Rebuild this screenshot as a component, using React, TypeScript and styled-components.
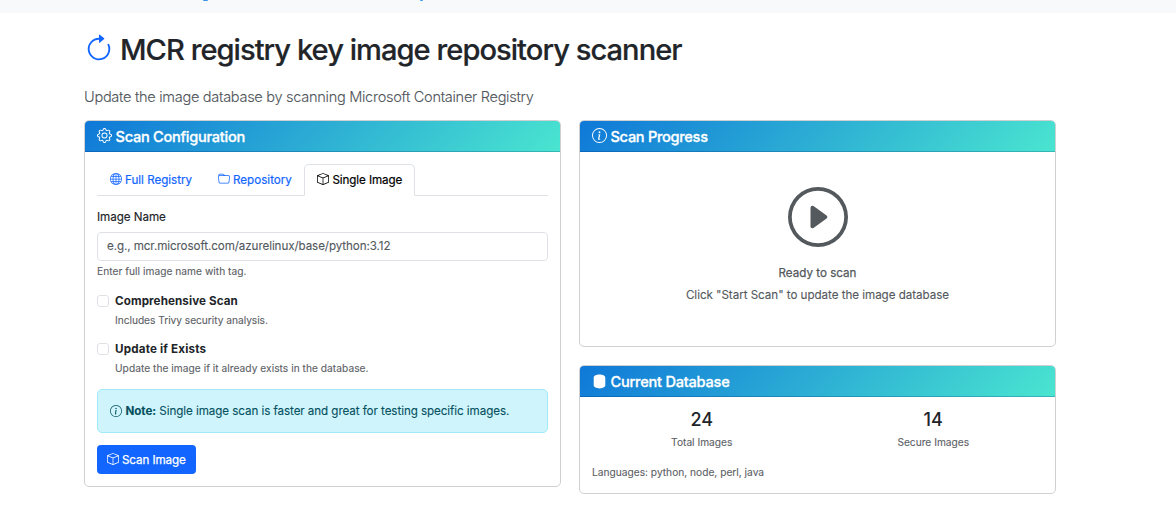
import React from "react";
import styled, { createGlobalStyle } from "styled-components";
import { BsArrowClockwise, BsBox, BsFolder, BsGear, BsGlobe, BsInfoCircle, BsPlayCircle } from "react-icons/bs";

const GlobalStyle = createGlobalStyle`
  *, *::before, *::after { box-sizing: border-box; }
  body {
    margin: 0;
    background: #fff;
    color: #212529;
    font: 400 11.64px/18px Inter, "Liberation Sans", sans-serif;
    overflow: hidden;
  }
  h1, h2, p { margin: 0; }
  svg { flex: none; display: block; }
`;

const Navbar = styled.div`
  height: 13px;
  background: #f8f9fb;
  display: flex;
  align-items: flex-start;
  padding-left: 203px;
  gap: 212px;
`;

const Tail = styled.span<{ $width: number }>`
  width: ${(p) => p.$width}px;
  height: 1px;
  border-radius: 0 0 2px 2px;
  background: #3b94ea;
`;

const Container = styled.main`
  width: 972px;
  margin: 0 0 0 84px;
`;

const Title = styled.h1`
  display: flex;
  align-items: center;
  gap: 6px;
  height: 36px;
  margin-top: 19px;
  font-size: 29.1px;
  line-height: 36px;
  font-weight: 500;
  -webkit-text-stroke: 0.2px currentColor;
  svg { color: #1266ff; margin-top: -3px; }
`;

const Fit = styled.span<{ $ls?: number }>`
  letter-spacing: ${(p) => p.$ls ?? 0}px;
  white-space: nowrap;
`;

const Lead = styled.p`
  margin-top: 18px;
  font-size: 14.55px;
  line-height: 22px;
  font-weight: 300;
  color: #50565b;
  -webkit-text-stroke: 0.1px currentColor;
`;

const Columns = styled.div`
  display: grid;
  grid-template-columns: 477px 477px;
  column-gap: 18px;
  align-items: start;
  margin-top: 12px;
`;

const Side = styled.div`
  display: grid;
  row-gap: 18px;
`;

const Card = styled.section<{ $height: number }>`
  height: ${(p) => p.$height}px;
  border: 1px solid #cfd0d1;
  border-radius: 5px;
  overflow: hidden;
`;

const CardHeader = styled.h2<{ $raised?: boolean }>`
  display: flex;
  align-items: center;
  gap: 3.5px;
  height: 31px;
  padding: 0 12px;
  color: #fff;
  font-size: 14.55px;
  font-weight: 500;
  line-height: 18px;
  -webkit-text-stroke: 0.3px #fff;
  background: linear-gradient(135deg, #0f78d8, #4ae5d0);
  border-bottom: 1px solid rgba(0, 40, 90, 0.22);
  span { padding-top: 2px; }
  svg { margin-top: ${(p) => (p.$raised ? -1 : 1)}px; }
`;

const CardBody = styled.div`
  padding: 12px;
`;

const Tabs = styled.div`
  display: flex;
  height: 32px;
  border-bottom: 1px solid #dee2e6;
`;

const Tab = styled.div<{ $active?: boolean; $width: number }>`
  display: flex;
  align-items: center;
  gap: ${(p) => (p.$active ? 3.5 : 3)}px;
  width: ${(p) => p.$width}px;
  height: 32px;
  padding: 0 0 1px 12px;
  border: 1px solid ${(p) => (p.$active ? "#dee2e6" : "transparent")};
  border-bottom-color: ${(p) => (p.$active ? "#fff" : "transparent")};
  border-radius: 5px 5px 0 0;
  color: ${(p) => (p.$active ? "#000" : "#1266ff")};
  -webkit-text-stroke: 0.2px currentColor;
  svg { margin-top: -1px; }
`;

const Label = styled.div`
  margin-top: 12px;
  -webkit-text-stroke: 0.15px currentColor;
`;

const Input = styled.div`
  height: 29px;
  margin-top: 6px;
  padding: 4px 9px;
  border: 1px solid #dee2e6;
  border-radius: 4px;
  color: #53595e;
  -webkit-text-stroke: 0.1px currentColor;
`;

const Small = styled.div`
  font-size: 10.2px;
  line-height: 16px;
  color: #5b6065;
  -webkit-text-stroke: 0.1px currentColor;
`;

const InputHint = styled(Small)`
  margin-top: 2px;
`;

const CheckRow = styled.div<{ $top: number }>`
  display: grid;
  grid-template-columns: 12px 1fr;
  column-gap: 6px;
  margin-top: ${(p) => p.$top}px;
`;

const Checkbox = styled.span`
  width: 12px;
  height: 12px;
  margin-top: 3px;
  border: 1px solid #dee2e6;
  border-radius: 3px;
`;

const Strong = styled.strong`
  font-weight: 700;
`;

const CheckHint = styled(Small)`
  margin-top: 2px;
`;

const Note = styled.div`
  display: flex;
  align-items: center;
  gap: 3.5px;
  height: 44px;
  margin-top: 13px;
  padding-left: 12px;
  border: 1px solid #9eeaf9;
  border-radius: 5px;
  background: #cff4fc;
  color: #055160;
  -webkit-text-stroke: 0.1px currentColor;
`;

const Button = styled.button`
  display: flex;
  align-items: center;
  gap: 3px;
  width: 99px;
  height: 29px;
  margin: 12px 0 0;
  padding: 0 0 0 10px;
  border: 0;
  border-radius: 4px;
  background: #1266ff;
  color: #fff;
  font: inherit;
  -webkit-text-stroke: 0.25px #fff;
  svg { margin-top: -1px; }
`;

const Ready = styled.div`
  display: flex;
  flex-direction: column;
  align-items: center;
  padding-top: 35px;
  color: #54595d;
`;

const ReadyText = styled.p<{ $top: number; $strong?: boolean }>`
  margin-top: ${(p) => p.$top}px;
  -webkit-text-stroke: ${(p) => (p.$strong ? 0.25 : 0.1)}px currentColor;
`;

const Stats = styled.div`
  display: grid;
  grid-template-columns: 1fr 1fr;
  width: 463px;
  margin-left: -6px;
  text-align: center;
`;

const Value = styled.div`
  font-size: 18px;
  line-height: 22px;
  font-weight: 500;
`;

const StatLabel = styled(Small)`
  margin-top: 3px;
`;

const Languages = styled(Small)`
  margin-top: 14px;
`;

const DatabaseIcon = () => (
  <svg width="15" height="15" viewBox="0 0 15 15" fill="currentColor">
    <path d="M1.700 3.700C1.700 1.800 4.400.6 7.500.6s5.800 1.200 5.800 3.100v7.600c0 1.900-2.700 3.100-5.800 3.100s-5.800-1.200-5.800-3.100Z" />
  </svg>
);

export default function App() {
  return (
    <>
      <GlobalStyle />
      <Navbar>
        <Tail $width={5} />
        <Tail $width={3} />
      </Navbar>
      <Container>
        <Title>
          <BsArrowClockwise size={30} />
          <Fit $ls={-0.96}>MCR registry key image repository scanner</Fit>
        </Title>
        <Lead><Fit $ls={-0.29}>Update the image database by scanning Microsoft Container Registry</Fit></Lead>
        <Columns>
          <Card $height={367}>
            <CardHeader $raised><BsGear size={15} /><Fit $ls={-0.25}>Scan Configuration</Fit></CardHeader>
            <CardBody>
              <Tabs>
                <Tab $width={108}><BsGlobe size={12} /><Fit $ls={-0.02}>Full Registry</Fit></Tab>
                <Tab $width={99}><BsFolder size={12} /><Fit>Repository</Fit></Tab>
                <Tab $active $width={111}><BsBox size={12} /><Fit $ls={-0.1}>Single Image</Fit></Tab>
              </Tabs>
              <Label><Fit $ls={-0.05}>Image Name</Fit></Label>
              <Input><Fit $ls={-0.09}>e.g., mcr.microsoft.com/azurelinux/base/python:3.12</Fit></Input>
              <InputHint><Fit $ls={0.03}>Enter full image name with tag.</Fit></InputHint>
              <CheckRow $top={13}>
                <Checkbox />
                <div>
                  <Strong><Fit $ls={0.1}>Comprehensive Scan</Fit></Strong>
                  <CheckHint><Fit $ls={-0.03}>Includes Trivy security analysis.</Fit></CheckHint>
                </div>
              </CheckRow>
              <CheckRow $top={12}>
                <Checkbox />
                <div>
                  <Strong><Fit $ls={0.18}>Update if Exists</Fit></Strong>
                  <CheckHint><Fit $ls={0.03}>Update the image if it already exists in the database.</Fit></CheckHint>
                </div>
              </CheckRow>
              <Note>
                <BsInfoCircle size={12} />
                <Fit $ls={-0.07}><Strong>Note:</Strong> Single image scan is faster and great for testing specific images.</Fit>
              </Note>
              <Button><BsBox size={12} /><Fit $ls={-0.1}>Scan Image</Fit></Button>
            </CardBody>
          </Card>
          <Side>
            <Card $height={227}>
              <CardHeader $raised><BsInfoCircle size={15} /><Fit $ls={-0.28}>Scan Progress</Fit></CardHeader>
              <Ready>
                <BsPlayCircle size={60} />
                <ReadyText $top={17} $strong><Fit>Ready to scan</Fit></ReadyText>
                <ReadyText $top={4}><Fit $ls={-0.04}>Click "Start Scan" to update the image database</Fit></ReadyText>
              </Ready>
            </Card>
            <Card $height={129}>
              <CardHeader><DatabaseIcon /><Fit $ls={-0.22}>Current Database</Fit></CardHeader>
              <CardBody>
                <Stats>
                  <div><Value>24</Value><StatLabel><Fit>Total Images</Fit></StatLabel></div>
                  <div><Value>14</Value><StatLabel><Fit>Secure Images</Fit></StatLabel></div>
                </Stats>
                <Languages><Fit>Languages: python, node, perl, java</Fit></Languages>
              </CardBody>
            </Card>
          </Side>
        </Columns>
      </Container>
    </>
  );
}
